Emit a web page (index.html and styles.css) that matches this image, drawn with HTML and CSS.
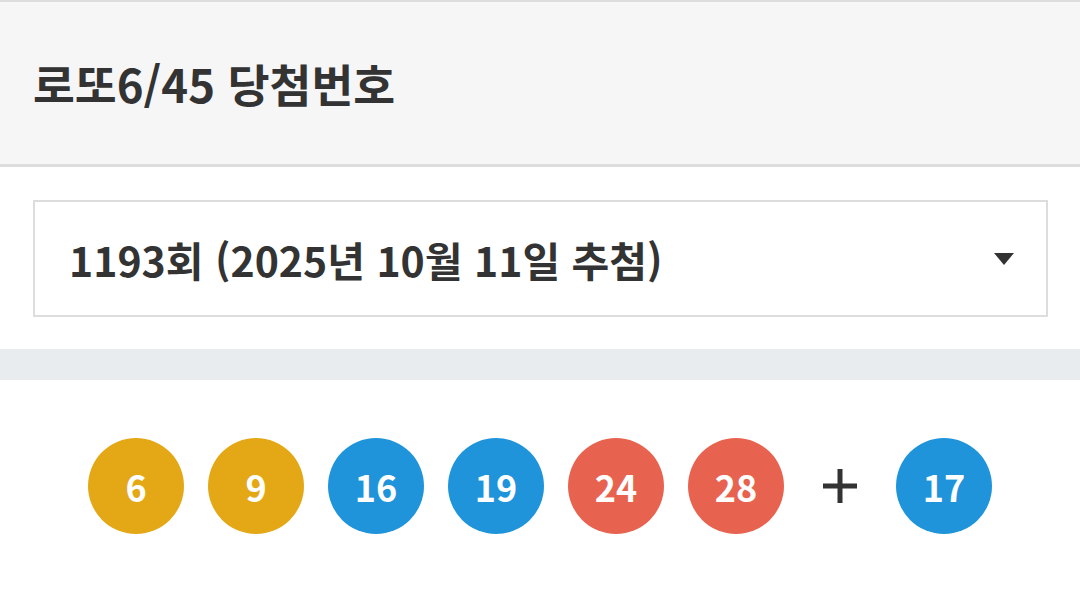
FILE: index.html
```html
<!DOCTYPE html>
<html lang="ko">
<head>
  <meta charset="UTF-8">
  <meta name="viewport" content="width=device-width, initial-scale=1.0">
  <title>로또6/45 당첨번호</title>
  <link rel="stylesheet" href="styles.css">
</head>
<body>
  <header class="header">
    <h1 class="title">로또6/45 당첨번호</h1>
  </header>

  <div class="select-wrap">
    <div class="select">
      <span class="select-text">1193회 (2025년 10월 11일 추첨)</span>
      <span class="arrow"></span>
    </div>
  </div>

  <div class="band"></div>

  <div class="balls">
    <span class="ball yellow">6</span>
    <span class="ball yellow">9</span>
    <span class="ball blue">16</span>
    <span class="ball blue">19</span>
    <span class="ball red">24</span>
    <span class="ball red">28</span>
    <span class="plus">
      <svg width="34" height="34" viewBox="0 0 34 34">
        <rect x="0" y="14.5" width="34" height="5" fill="#333"/>
        <rect x="14.5" y="0" width="5" height="34" fill="#333"/>
      </svg>
    </span>
    <span class="ball blue">17</span>
  </div>
</body>
</html>
```

FILE: styles.css
```css
body {
  margin: 0;
  font-family: "Noto Sans CJK KR", "Noto Sans", sans-serif;
  background-color: #fff;
  color: #333;
}

.header {
  height: 162px;
  background-color: #f6f6f6;
  border-top: 2px solid #dddddd;
  border-bottom: 3px solid #dddddd;
  display: flex;
  align-items: center;
  padding: 0 33px;
}

.title {
  margin: 0;
  font-size: 45.5px;
  font-weight: 700;
  color: #333;
}

.select-wrap {
  padding: 33px 32px 32px 33px;
}

.select {
  height: 113px;
  border: 2px solid #dddddd;
  display: flex;
  align-items: center;
  justify-content: space-between;
  padding: 0 32px 0 34px;
}

.select-text {
  font-size: 41px;
  font-weight: 700;
}

.arrow {
  width: 0;
  height: 0;
  border-left: 10px solid transparent;
  border-right: 10px solid transparent;
  border-top: 12px solid #333;
}

.band {
  height: 31px;
  background-color: #e8ecee;
}

.balls {
  display: flex;
  justify-content: center;
  align-items: center;
  gap: 24px;
  padding-top: 58px;
}

.ball {
  width: 96px;
  height: 96px;
  border-radius: 50%;
  display: flex;
  align-items: center;
  justify-content: center;
  color: #fff;
  font-size: 36px;
  font-weight: 700;
}

.yellow {
  background-color: #e4a816;
}

.blue {
  background-color: #1f94da;
}

.red {
  background-color: #e8634f;
}

.plus {
  display: flex;
  margin: 0 15px;
}
```
